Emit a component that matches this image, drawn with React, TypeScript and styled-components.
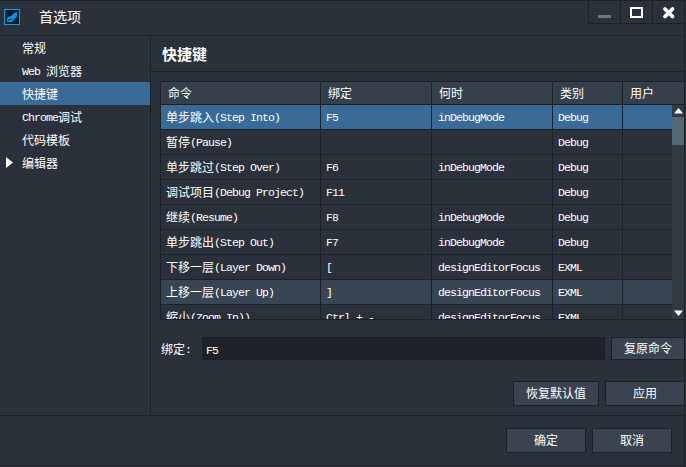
import React from "react";
import styled, { createGlobalStyle, css } from "styled-components";

const line = "#1c2127";
const base = "#2a313a";
const blue = "#396a98";

const Global = createGlobalStyle`
  * { box-sizing: border-box; }
  body { margin: 0; background: #30353a; overflow: hidden; }
`;

const Window = styled.div`
  width: 685px;
  height: 466px;
  display: flex;
  flex-direction: column;
  background: ${base};
  border: solid ${line};
  border-width: 1px 1px 1px 0;
  color: #fff;
  font: 12px/16px "Noto Sans CJK SC", sans-serif;
  white-space: pre;
  cursor: default;
`;

const Latin = styled.span`
  font-family: "Liberation Mono", monospace;
  font-size: 11.5px;
  letter-spacing: -0.9px;
  line-height: 1;
  vertical-align: 1px;
`;

const TitleBar = styled.header`
  flex: 0 0 35px;
  display: flex;
  border-bottom: 1px solid ${line};
  padding-left: 4px;
`;

const Logo = styled.svg`
  margin-top: 8px;
  width: 16px;
  height: 16px;
`;

const Title = styled.h1`
  flex: 1;
  margin: 5px 0 0 19px;
  font-size: 14px;
  line-height: 20px;
  font-weight: 400;
`;

const WindowButton = styled.button`
  width: 32px;
  height: 23px;
  padding: 0;
  border: solid ${line};
  border-width: 0 0 1px 1px;
  background: ${base};
  svg { display: block; }
`;

const Body = styled.div`
  flex: 0 0 380px;
  display: flex;
  border-bottom: 1px solid ${line};
`;

const Sidebar = styled.nav`
  flex: 0 0 151px;
  border-right: 1px solid ${line};
`;

const NavItem = styled.div<{ $active?: boolean }>`
  height: 23px;
  display: flex;
  align-items: center;
  padding: 1px 0 0 6px;
  background: ${(p) => (p.$active ? blue : "transparent")};
`;

const Twisty = styled.span`
  width: 16px;
  height: 12px;
  svg { display: block; }
`;

const Main = styled.main`
  flex: 1;
  min-width: 0;
`;

const Heading = styled.h2`
  height: 36px;
  margin: 0;
  padding: 8px 0 0 11px;
  border-bottom: 1px solid ${line};
  font-size: 15px;
  line-height: 20px;
  font-weight: 700;
`;

const Table = styled.section`
  height: 239px;
  margin: 9px 0 0 9px;
  border: solid ${line};
  border-width: 1px 0 1px 1px;
  display: flex;
  flex-direction: column;
`;

const columns = css`
  display: grid;
  grid-template-columns: 160px 111px 121px 70px 1fr;
`;

const HeaderRow = styled.div`
  ${columns}
  flex: 0 0 23px;
  background: #35404b;
  border-bottom: 1px solid ${line};
`;

const HeaderCell = styled.div`
  padding: 3px 0 0 7px;
  border-right: 1px solid ${line};
  &:last-child { border-right: 0; }
`;

const Viewport = styled.div`
  flex: 1;
  min-height: 0;
  display: flex;
`;

const Rows = styled.div`
  flex: 1;
  overflow: hidden;
`;

const Row = styled.div<{ $state?: "selected" | "hover" }>`
  ${columns}
  height: 25px;
  border-bottom: 1px solid ${line};
  background: ${(p) => (p.$state === "selected" ? blue : p.$state === "hover" ? "#384653" : base)};
`;

const Cell = styled.div`
  padding: 4px 0 0 5px;
  border-right: 1px solid ${line};
  &:nth-child(3) { padding-left: 6px; }
  &:last-child { border-right: 0; }
`;

const Scrollbar = styled.div`
  flex: 0 0 12px;
  display: flex;
  flex-direction: column;
  background: #2f3a43;
`;

const Arrow = styled.svg`
  flex: 0 0 12px;
  width: 12px;
  height: 12px;
`;

const Track = styled.div`
  flex: 1;
`;

const Thumb = styled.div`
  height: 28px;
  background: #536873;
`;

const Binding = styled.div`
  display: flex;
  height: 23px;
  margin: 17px 0 0 10px;
`;

const BindingLabel = styled.label`
  width: 41px;
  padding-top: 4px;
`;

const Field = styled.div`
  width: 403px;
  margin-right: 6px;
  padding: 4px 0 0 3px;
  border: 1px solid ${line};
  background: #1e2229;
`;

const Button = styled.button<{ $w: number; $h?: number; $open?: boolean }>`
  flex: none;
  width: ${(p) => p.$w}px;
  height: ${(p) => p.$h ?? 25}px;
  padding: 0 0 1px;
  border: 1px solid ${line};
  ${(p) => p.$open && "border-right: 0;"}
  background: #394450;
  color: #fff;
  font: inherit;
`;

const Actions = styled.div`
  display: flex;
  justify-content: flex-end;
  gap: 6px;
  margin-top: 21px;
`;

const Footer = styled.footer`
  display: flex;
  justify-content: flex-end;
  gap: 6px;
  padding: 12px 12px 0 0;
`;

const Text = ({ children }: { children: string }) => (
  <>
    {children.split(/([\x20-\x7e]+)/).filter(Boolean).map((part, i) =>
      /^[\x20-\x7e]/.test(part) ? <Latin key={i}>{part}</Latin> : part
    )}
  </>
);

const nav = ["常规", "Web 浏览器", "快捷键", "Chrome调试", "代码模板", "编辑器"];
const heads = ["命令", "绑定", "何时", "类别", "用户"];
const rows = [
  ["单步跳入(Step Into)", "F5", "inDebugMode", "Debug", ""],
  ["暂停(Pause)", "", "", "Debug", ""],
  ["单步跳过(Step Over)", "F6", "inDebugMode", "Debug", ""],
  ["调试项目(Debug Project)", "F11", "", "Debug", ""],
  ["继续(Resume)", "F8", "inDebugMode", "Debug", ""],
  ["单步跳出(Step Out)", "F7", "inDebugMode", "Debug", ""],
  ["下移一层(Layer Down)", "[", "designEditorFocus", "EXML", ""],
  ["上移一层(Layer Up)", "]", "designEditorFocus", "EXML", ""],
  ["缩小(Zoom In))", "Ctrl + -", "designEditorFocus", "EXML", ""],
];

export default function App() {
  return (
    <>
      <Global />
      <Window>
        <TitleBar>
          <Logo viewBox="0 0 16 16">
            <rect x=".5" y=".5" width="15" height="15" fill="#061e2d" stroke="#0aa0ee" />
            <path d="M13 3v4l-1 2-2 1v1l-2 2H3v-3l1-2 3-1 3-3z" fill="#0d8ddb" />
            <path d="M4 11.5l2-1h2" fill="none" stroke="#063a5c" />
          </Logo>
          <Title>首选项</Title>
          <WindowButton aria-label="minimize">
            <svg width="31" height="22"><path d="M9 14h13v3H9z" fill="#6e747b" /></svg>
          </WindowButton>
          <WindowButton aria-label="maximize">
            <svg width="31" height="22"><path d="M10 7h11v9H10z" fill="none" stroke="#fff" strokeWidth="2" /></svg>
          </WindowButton>
          <WindowButton aria-label="close">
            <svg width="31" height="22"><path d="M12 8l7.5 7.5m0-7.5L12 15.5" stroke="#fff" strokeWidth="3.8" strokeLinecap="round" /></svg>
          </WindowButton>
        </TitleBar>
        <Body>
          <Sidebar>
            {nav.map((n) => (
              <NavItem key={n} $active={n === "快捷键"}>
                <Twisty>
                  {n === "编辑器" && <svg width="12" height="12"><path d="M0 0v11l7-5.5z" fill="#fff" /></svg>}
                </Twisty>
                <span><Text>{n}</Text></span>
              </NavItem>
            ))}
          </Sidebar>
          <Main>
            <Heading>快捷键</Heading>
            <Table>
              <HeaderRow>{heads.map((h) => <HeaderCell key={h}>{h}</HeaderCell>)}</HeaderRow>
              <Viewport>
                <Rows>
                  {rows.map((r, i) => (
                    <Row key={i} $state={i === 0 ? "selected" : i === 7 ? "hover" : undefined}>
                      {r.map((c, j) => <Cell key={j}><Text>{c}</Text></Cell>)}
                    </Row>
                  ))}
                </Rows>
                <Scrollbar>
                  <Arrow><path d="M2 8.5L6.5 3 11 8.5z" fill="#fff" /></Arrow>
                  <Track><Thumb /></Track>
                  <Arrow><path d="M2 3.5L6.5 9 11 3.5z" fill="#fff" /></Arrow>
                </Scrollbar>
              </Viewport>
            </Table>
            <Binding>
              <BindingLabel><Text>绑定:</Text></BindingLabel>
              <Field><Text>F5</Text></Field>
              <Button $w={73} $h={23} $open>复原命令</Button>
            </Binding>
            <Actions>
              <Button $w={86}>恢复默认值</Button>
              <Button $w={79} $open>应用</Button>
            </Actions>
          </Main>
        </Body>
        <Footer>
          <Button $w={80}>确定</Button>
          <Button $w={80}>取消</Button>
        </Footer>
      </Window>
    </>
  );
}
